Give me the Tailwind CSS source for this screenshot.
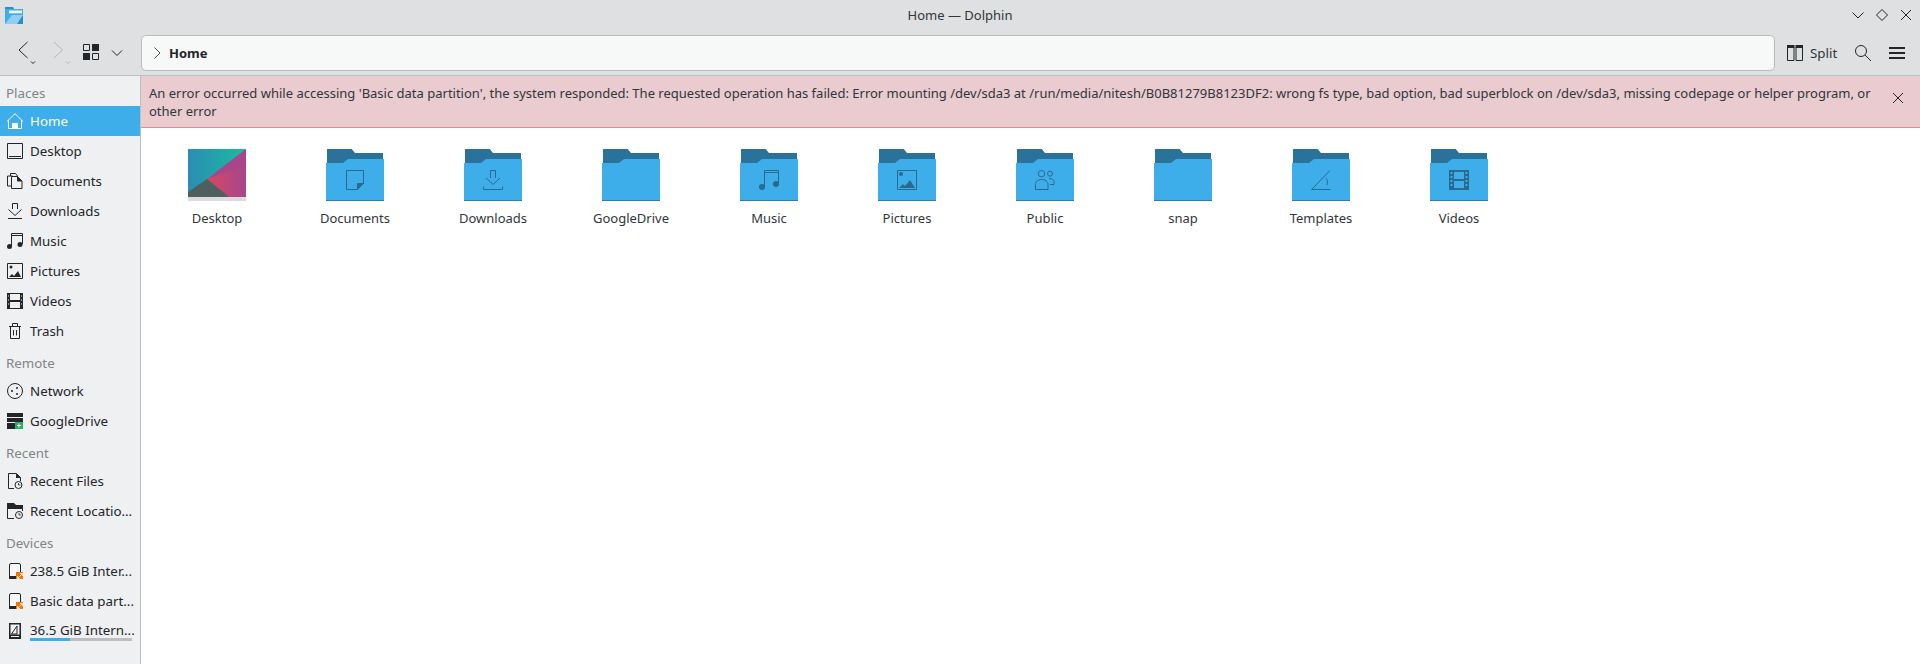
<!DOCTYPE html>
<html lang="en">
<head>
  <meta charset="UTF-8">
  <title>Home — Dolphin</title>
  <script src="https://cdn.jsdelivr.net/npm/@tailwindcss/browser@4"></script>
</head>
<body class="w-[1920px] h-[664px] overflow-hidden bg-white text-[#232629] font-['Noto_Sans',sans-serif] text-[13.33px] leading-[18px]">
  <!-- Title bar -->
  <div class="h-[30px] bg-[#dee0e2] flex items-center">
    <div class="w-[80px]">
      <svg class="ml-[5px] w-[18px] h-[18px] mt-[1px]" viewBox="0 0 18 18">
        <path d="M0 0h8l1 2h9v15H0z" fill="#2c8ec8"/>
        <path d="M0 2h18v15H0z" fill="#3daee9"/>
        <path d="M9 8h9v9H9z" fill="#2c8ec8"/>
        <path d="M0 17l7-9h11l-6 9z" fill="#8fd0f2"/>
        <path d="M4 3.500h13v2.800H4z" fill="#f4f8fb"/>
      </svg>
    </div>
    <div class="flex-1 text-center text-[13px] text-[#31363b] -mt-[1px]">Home — Dolphin</div>
    <div class="w-[80px] flex items-center justify-end gap-[8px] pr-[6px]">
      <svg class="w-4 h-4" viewBox="0 0 16 16" fill="none" stroke="#232629"><path d="M2.500 5.500L8 11l5.500-5.500"/></svg>
      <svg class="w-4 h-4" viewBox="0 0 16 16" fill="none" stroke="#232629"><path d="M8 2.500L13.500 8 8 13.500 2.500 8z"/></svg>
      <svg class="w-4 h-4" viewBox="0 0 16 16" fill="none" stroke="#232629"><path d="M3 3l10 10M13 3L3 13"/></svg>
    </div>
  </div>

  <!-- Toolbar -->
  <div class="h-[46px] bg-[#dee0e2] border-b border-[#bcbec0] flex items-center">
    <div class="w-[141px] flex items-center shrink-0 pl-[18px]">
      <svg class="w-[20px] h-[26px]" viewBox="0 0 20 26" fill="none" stroke="#232629"><path d="M9.500 2L1 10l8.500 8"/><path d="M13 21.500l2 2 2-2"/></svg>
      <svg class="w-[20px] h-[26px] ml-[15px]" viewBox="0 0 20 26" fill="none" stroke="#b4b6b8"><path d="M1 2l8.500 8L1 18"/><path d="M13 21.500l2 2 2-2"/></svg>
      <svg class="w-4 h-4 ml-[10px] -mt-[1px]" viewBox="0 0 16 16"><path d="M.5.500h6v6h-6zM9.500 9.500h6v6h-6z" fill="none" stroke="#232629"/><path d="M9 0h7v7H9zM0 9h7v7H0z" fill="#232629"/></svg>
      <svg class="w-[12px] h-[12px] ml-[12px]" viewBox="0 0 12 12" fill="none" stroke="#232629"><path d="M1 3.500L6 8.500l5-5"/></svg>
    </div>
    <div class="w-[1634px] h-[36px] bg-[#f7f8f8] border border-[#b8babc] rounded-[5px] flex items-center pl-[11px] shrink-0">
      <svg class="w-[8px] h-[12px]" viewBox="0 0 8 12" fill="none" stroke="#4d4d4d"><path d="M1.500.500L7 6l-5.500 5.500"/></svg>
      <span class="ml-[8px] font-bold text-[13px]">Home</span>
    </div>
    <div class="flex items-center ml-[12px]">
      <svg class="w-4 h-4" viewBox="0 0 16 16" fill="none" stroke="#232629"><path d="M.5 2.500h6.500v13H.5zM9 2.500h6.500v13H9z"/><path d="M0 0h7.500v3H0zM8.500 0H16v3H8.500z" fill="#232629" stroke="none"/></svg>
      <span class="ml-[7px] text-[#31363b]">Split</span>
      <svg class="w-4 h-4 ml-[18px]" viewBox="0 0 16 16" fill="none" stroke="#232629"><circle cx="6" cy="6" r="5.500"/><path d="M10 10l6 6"/></svg>
      <svg class="w-4 h-4 ml-[18px]" viewBox="0 0 16 16" fill="#232629"><path d="M0 2h16v2H0zM0 7h16v2H0zM0 12h16v2H0z"/></svg>
    </div>
  </div>

  <div class="flex h-[588px]">
    <!-- Places panel -->
    <aside class="w-[141px] shrink-0 bg-[#eff0f1] border-r border-[#bcbec0] flex flex-col">
      <div class="h-[30px] pl-[6px] pt-[8px] text-[#7f8587]">Places</div>
      <div class="h-[30px] bg-[#3daee9] text-[#fcfcfc] flex items-center gap-[7px] pl-[7px]">
        <svg class="w-4 h-4 shrink-0" viewBox="0 0 16 16" fill="none" stroke="#fcfcfc"><path d="M0 8.500L8 .7l8 7.800M1.500 7v8.500h13V7"/><path d="M5.500 15.500v-5h5v5z" fill="#fcfcfc"/></svg>
        Home
      </div>
      <div class="h-[30px] flex items-center gap-[7px] pl-[7px]">
        <svg class="w-4 h-4 shrink-0" viewBox="0 0 16 16" fill="none" stroke="#232629"><path d="M.5.500h15v15H.5zM2 13.500h12"/></svg>
        Desktop
      </div>
      <div class="h-[30px] flex items-center gap-[7px] pl-[7px]">
        <svg class="w-4 h-4 shrink-0" viewBox="0 0 16 16" fill="none" stroke="#232629"><path d="M5.500 3H.5v10h4"/><path d="M3.500 3V.5h5l2 2.500"/><path d="M4.500 3.500h6l4.500 4.500v7.500H4.500z"/><path d="M10.500 3.500V8H15z" fill="#232629"/></svg>
        Documents
      </div>
      <div class="h-[30px] flex items-center gap-[7px] pl-[7px]">
        <svg class="w-4 h-4 shrink-0" viewBox="0 0 16 16" fill="none" stroke="#232629"><path d="M5.500 6V.5h5V6M1.500 6.500L8 12.500l6.500-6M1 15.500h14"/></svg>
        Downloads
      </div>
      <div class="h-[30px] flex items-center gap-[7px] pl-[7px]">
        <svg class="w-4 h-4 shrink-0" viewBox="0 0 16 16"><path d="M4.500 13V.5h11V11M4.500 2.500h11" fill="none" stroke="#232629"/><circle cx="2.500" cy="13.500" r="2.500" fill="#232629"/><circle cx="13" cy="11.500" r="2.500" fill="#232629"/></svg>
        Music
      </div>
      <div class="h-[30px] flex items-center gap-[7px] pl-[7px]">
        <svg class="w-4 h-4 shrink-0" viewBox="0 0 16 16"><path d="M.5.500h15v15H.5z" fill="none" stroke="#232629"/><circle cx="4" cy="4" r="1.500" fill="#232629"/><path d="M2 14l3-3 2 2 4-5 3 6z" fill="#232629"/></svg>
        Pictures
      </div>
      <div class="h-[30px] flex items-center gap-[7px] pl-[7px]">
        <svg class="w-4 h-4 shrink-0" viewBox="0 0 16 16"><path fill-rule="evenodd" d="M0 0h16v16H0zM3 1v6h10V1zM3 9v6h10V9z" fill="#232629"/><path d="M1 2h1v2H1zM1 6h1v2H1zM1 10h1v2H1zM14 2h1v2h-1zM14 6h1v2h-1zM14 10h1v2h-1z" fill="#8a8d90"/></svg>
        Videos
      </div>
      <div class="h-[30px] flex items-center gap-[7px] pl-[7px]">
        <svg class="w-4 h-4 shrink-0" viewBox="0 0 16 16" fill="none" stroke="#232629"><path d="M2 3.500h12M5.500 3V.5h5V3M3.500 3.500v12h9v-12M6.500 7v5.500M9.500 7v5.500"/></svg>
        Trash
      </div>
      <div class="h-[30px] pl-[6px] pt-[8px] text-[#7f8587]">Remote</div>
      <div class="h-[30px] flex items-center gap-[7px] pl-[7px]">
        <svg class="w-4 h-4 shrink-0" viewBox="0 0 16 16"><circle cx="8" cy="8" r="7.500" fill="none" stroke="#232629"/><circle cx="5" cy="8" r="1" fill="#232629"/><circle cx="10" cy="5" r="1" fill="#232629"/><circle cx="10" cy="11" r="1" fill="#232629"/></svg>
        Network
      </div>
      <div class="h-[30px] flex items-center gap-[7px] pl-[7px]">
        <svg class="w-4 h-4 shrink-0" viewBox="0 0 16 16"><path d="M0 0h16v4H0zM0 5h16v4H0zM0 10h16v6H0z" fill="#232629"/><path d="M8 9h8v7H8z" fill="#27ae60"/><path d="M10 12.500h4M12 10.500v4" stroke="#fcfcfc"/></svg>
        GoogleDrive
      </div>
      <div class="h-[30px] pl-[6px] pt-[8px] text-[#7f8587]">Recent</div>
      <div class="h-[30px] flex items-center gap-[7px] pl-[7px]">
        <svg class="w-4 h-4 shrink-0" viewBox="0 0 16 16"><path d="M7 15.500H1.500V.5h8l4 4V8" fill="none" stroke="#232629"/><path d="M9 .5V5h5" fill="#232629"/><circle cx="11.500" cy="12" r="3.500" fill="#eff0f1" stroke="#232629"/><path d="M11.500 10v2h2" fill="none" stroke="#232629" stroke-width=".8"/></svg>
        Recent Files
      </div>
      <div class="h-[30px] flex items-center gap-[7px] pl-[7px]">
        <svg class="w-4 h-4 shrink-0" viewBox="0 0 16 16"><path d="M0 0h7l2 2h7v4H0z" fill="#232629"/><path d="M.5 5v10.500H7M15.500 5v3" fill="none" stroke="#232629"/><circle cx="12" cy="12" r="3.500" fill="#eff0f1" stroke="#232629"/><path d="M12 10v2h2" fill="none" stroke="#232629" stroke-width=".8"/></svg>
        Recent Locatio...
      </div>
      <div class="h-[30px] pl-[6px] pt-[8px] text-[#7f8587]">Devices</div>
      <div class="h-[30px] flex items-center gap-[7px] pl-[7px]">
        <svg class="w-4 h-4 shrink-0" viewBox="0 0 16 16"><rect x="2.500" y=".5" width="11" height="15" rx="1.500" fill="#f7f8f8" stroke="#232629"/><path d="M2 13h12v3H2z" fill="#232629"/><path d="M9 9h8v8H9z" fill="#f67400"/><path d="M10.500 15.500l5-5M13 10.500h2.500V13M10.500 13v2.500H13" stroke="#fcfcfc" fill="none" stroke-width=".8"/></svg>
        238.5 GiB Inter...
      </div>
      <div class="h-[30px] flex items-center gap-[7px] pl-[7px]">
        <svg class="w-4 h-4 shrink-0" viewBox="0 0 16 16"><rect x="2.500" y=".5" width="11" height="15" rx="1.500" fill="#f7f8f8" stroke="#232629"/><path d="M2 13h12v3H2z" fill="#232629"/><path d="M9 9h8v8H9z" fill="#f67400"/><path d="M10.500 15.500l5-5M13 10.500h2.500V13M10.500 13v2.500H13" stroke="#fcfcfc" fill="none" stroke-width=".8"/></svg>
        Basic data part...
      </div>
      <div class="h-[30px] flex items-center gap-[7px] pl-[7px]">
        <svg class="w-4 h-4 shrink-0" viewBox="0 0 16 16"><path d="M2 0h12v16H2z" fill="#232629"/><path d="M3.500 1.500h9v10h-9z" fill="#eff0f1"/><path d="M4.500 11L10 3v8z" fill="none" stroke="#232629"/><path d="M4 13.500h8" stroke="#eff0f1"/></svg>
        <div class="flex flex-col mt-[2px]">
          <span class="leading-[15px]">36.5 GiB Intern...</span>
          <div class="w-[102px] h-[3px] bg-[#bcbec0]"><div class="h-full bg-[#3daee9]" style="width:39%"></div></div>
        </div>
      </div>
    </aside>

    <main class="flex-1 flex flex-col">
      <!-- Error message -->
      <div class="h-[52px] bg-[#e9cbd0] border-b border-[#da8d93] flex pl-[8px] pt-[8px] text-[13px] text-[#31363b]">
        <p class="w-[1740px]">An error occurred while accessing 'Basic data partition', the system responded: The requested operation has failed: Error mounting /dev/sda3 at /run/media/nitesh/B0B81279B8123DF2: wrong fs type, bad option, bad superblock on /dev/sda3, missing codepage or helper program, or other error</p>
        <svg class="w-4 h-4 ml-[1px] mt-[6px]" viewBox="0 0 16 16" fill="none" stroke="#232629"><path d="M3 3l10 10M13 3L3 13"/></svg>
      </div>

      <!-- Folder view -->
      <div class="flex pl-[7px] pt-[21px] text-[13px] text-[#31363b]">
        <div class="w-[138px] flex flex-col items-center gap-[8px]">
          <svg class="w-[58px] h-[52px]" viewBox="0 0 58 52">
            <defs><linearGradient id="wp" x1="0" y1="0" x2="1" y2="0"><stop offset="0" stop-color="#2b8db5"/><stop offset="1" stop-color="#1abc9c"/></linearGradient>
            <linearGradient id="rd" x1="0" y1="0" x2="1" y2="0"><stop offset="0" stop-color="#d2495f"/><stop offset="1" stop-color="#a8468d"/></linearGradient></defs>
            <path d="M0 0h58v48H0z" fill="url(#wp)"/>
            <path d="M58 0L19 30l39 18z" fill="#a8468d"/>
            <path d="M19 30l39-14v32H40z" fill="url(#rd)"/>
            <path d="M0 48v-5l19-13 22 18z" fill="#4e5f5e"/>
            <path d="M0 48h58v4H0z" fill="#dcdcdc"/>
          </svg>
          <span>Desktop</span>
        </div>
        <div class="w-[138px] flex flex-col items-center gap-[8px]">
          <svg class="w-[58px] h-[52px]" viewBox="0 0 58 52">
            <path d="M1 0h24.700L29 4h28v12H1z" fill="#2a7299"/><path d="M0 14h17l5-4h36v42H0z" fill="#3daee9"/><path d="M0 51h58v1H0z" fill="#2a7fb0"/>
            <g transform="translate(19 21)" fill="none" stroke="#2a6a8f" stroke-width="1"><path d="M1.500.5h17v13l-6 6h-11z"/><path d="M12.500 19.500v-6h6z" fill="#2a6a8f"/></g>
          </svg>
          <span>Documents</span>
        </div>
        <div class="w-[138px] flex flex-col items-center gap-[8px]">
          <svg class="w-[58px] h-[52px]" viewBox="0 0 58 52">
            <path d="M1 0h24.700L29 4h28v12H1z" fill="#2a7299"/><path d="M0 14h17l5-4h36v42H0z" fill="#3daee9"/><path d="M0 51h58v1H0z" fill="#2a7fb0"/>
            <g transform="translate(19 21)" fill="none" stroke="#2a6a8f"><path d="M7.500 8V.5h5V8M3 8l7 6.500L17 8M.5 16.500v3h19v-3"/></g>
          </svg>
          <span>Downloads</span>
        </div>
        <div class="w-[138px] flex flex-col items-center gap-[8px]">
          <svg class="w-[58px] h-[52px]" viewBox="0 0 58 52">
            <path d="M1 0h24.700L29 4h28v12H1z" fill="#2a7299"/><path d="M0 14h17l5-4h36v42H0z" fill="#3daee9"/><path d="M0 51h58v1H0z" fill="#2a7fb0"/>
          </svg>
          <span>GoogleDrive</span>
        </div>
        <div class="w-[138px] flex flex-col items-center gap-[8px]">
          <svg class="w-[58px] h-[52px]" viewBox="0 0 58 52">
            <path d="M1 0h24.700L29 4h28v12H1z" fill="#2a7299"/><path d="M0 14h17l5-4h36v42H0z" fill="#3daee9"/><path d="M0 51h58v1H0z" fill="#2a7fb0"/>
            <g transform="translate(19 21)"><path d="M5.500 16V.5h14V14M5.500 2.500h14" fill="none" stroke="#2a6a8f"/><circle cx="3" cy="17" r="3" fill="#2a6a8f"/><circle cx="17" cy="14" r="3" fill="#2a6a8f"/></g>
          </svg>
          <span>Music</span>
        </div>
        <div class="w-[138px] flex flex-col items-center gap-[8px]">
          <svg class="w-[58px] h-[52px]" viewBox="0 0 58 52">
            <path d="M1 0h24.700L29 4h28v12H1z" fill="#2a7299"/><path d="M0 14h17l5-4h36v42H0z" fill="#3daee9"/><path d="M0 51h58v1H0z" fill="#2a7fb0"/>
            <g transform="translate(19 21)"><path d="M.5.5h19v19H.5z" fill="none" stroke="#2a6a8f"/><circle cx="4" cy="4" r="2" fill="#2a6a8f"/><path d="M2 18l4-4 2 2 5-6 5 8z" fill="#2a6a8f"/></g>
          </svg>
          <span>Pictures</span>
        </div>
        <div class="w-[138px] flex flex-col items-center gap-[8px]">
          <svg class="w-[58px] h-[52px]" viewBox="0 0 58 52">
            <path d="M1 0h24.700L29 4h28v12H1z" fill="#2a7299"/><path d="M0 14h17l5-4h36v42H0z" fill="#3daee9"/><path d="M0 51h58v1H0z" fill="#2a7fb0"/>
            <g transform="translate(19 21)" fill="none" stroke="#2a6a8f"><circle cx="6.500" cy="3.700" r="3.200"/><circle cx="15" cy="3.700" r="2.500"/><path d="M.5 19.500v-5c0-3 2.500-5 6-5s6.500 2 6.500 5v5z"/><path d="M14 8.500c3 0 5 1 5 3.500v2.500h-4"/></g>
          </svg>
          <span>Public</span>
        </div>
        <div class="w-[138px] flex flex-col items-center gap-[8px]">
          <svg class="w-[58px] h-[52px]" viewBox="0 0 58 52">
            <path d="M1 0h24.700L29 4h28v12H1z" fill="#2a7299"/><path d="M0 14h17l5-4h36v42H0z" fill="#3daee9"/><path d="M0 51h58v1H0z" fill="#2a7fb0"/>
          </svg>
          <span>snap</span>
        </div>
        <div class="w-[138px] flex flex-col items-center gap-[8px]">
          <svg class="w-[58px] h-[52px]" viewBox="0 0 58 52">
            <path d="M1 0h24.700L29 4h28v12H1z" fill="#2a7299"/><path d="M0 14h17l5-4h36v42H0z" fill="#3daee9"/><path d="M0 51h58v1H0z" fill="#2a7fb0"/>
            <g transform="translate(19 21)" fill="none" stroke="#2a6a8f"><path d="M19 .5L.5 19.500h19"/><path d="M15 8c1.500 2 2 5 1 7"/></g>
          </svg>
          <span>Templates</span>
        </div>
        <div class="w-[138px] flex flex-col items-center gap-[8px]">
          <svg class="w-[58px] h-[52px]" viewBox="0 0 58 52">
            <path d="M1 0h24.700L29 4h28v12H1z" fill="#2a7299"/><path d="M0 14h17l5-4h36v42H0z" fill="#3daee9"/><path d="M0 51h58v1H0z" fill="#2a7fb0"/>
            <g transform="translate(19 21)"><path fill-rule="evenodd" d="M0 0h20v20H0zM5 2v7h10V2zM5 11v7h10v-7z" fill="#2a6a8f"/><path d="M1.500 2h2v2h-2zM1.500 6h2v2h-2zM1.500 10h2v2h-2zM1.500 14h2v2h-2zM16.500 2h2v2h-2zM16.500 6h2v2h-2zM16.500 10h2v2h-2zM16.500 14h2v2h-2z" fill="#3daee9"/></g>
          </svg>
          <span>Videos</span>
        </div>
      </div>
    </main>
  </div>
</body>
</html>
